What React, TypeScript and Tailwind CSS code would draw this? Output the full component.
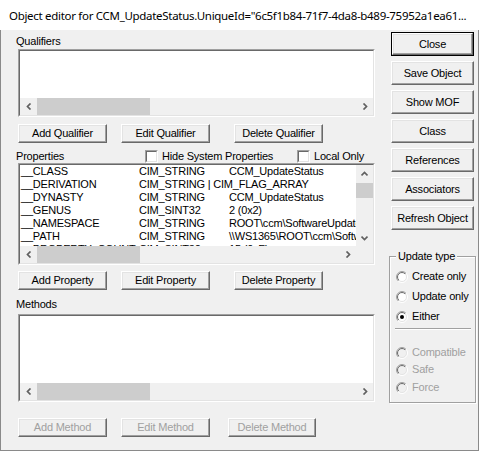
import { useId } from "react";

const SANS = "font-['Liberation_Sans',Arial,sans-serif]";

const rows = [
  { name: "__CLASS", type: "CIM_STRING", value: "CCM_UpdateStatus" },
  { name: "__DERIVATION", type: "CIM_STRING | CIM_FLAG_ARRAY", value: "" },
  { name: "__DYNASTY", type: "CIM_STRING", value: "CCM_UpdateStatus" },
  { name: "__GENUS", type: "CIM_SINT32", value: "2 (0x2)" },
  { name: "__NAMESPACE", type: "CIM_STRING", value: "ROOT\\ccm\\SoftwareUpdates\\UpdatesStore" },
  { name: "__PATH", type: "CIM_STRING", value: "\\\\WS1365\\ROOT\\ccm\\SoftwareUpdates" },
  { name: "__PROPERTY_COUNT", type: "CIM_SINT32", value: "15 (0xF)" },
];

function Chevron({ dir }: { dir: "left" | "right" | "up" | "down" }) {
  const pts = {
    left: "4.5,0.5 1.5,3.5 4.5,6.5",
    right: "1.5,0.5 4.5,3.5 1.5,6.5",
    up: "0.5,4.5 3.5,1.5 6.5,4.5",
    down: "0.5,1.5 3.5,4.5 6.5,1.5",
  }[dir];
  const horiz = dir === "left" || dir === "right";
  return (
    <svg width={horiz ? 6 : 7} height={horiz ? 7 : 6} viewBox={horiz ? "0 0 6 7" : "0 0 7 6"}>
      <polyline points={pts} fill="none" stroke="#606060" strokeWidth="1.7" />
    </svg>
  );
}

function Btn({
  label,
  w = "w-[89px]",
  h = "h-[19px]",
  disabled = false,
  isDefault = false,
}: {
  label: string;
  w?: string;
  h?: string;
  disabled?: boolean;
  isDefault?: boolean;
}) {
  const face = (
    <div
      className={`flex items-center justify-center bg-[#f0f0f0] border border-t-white border-l-white border-r-[#696969] border-b-[#696969] shadow-[inset_-1px_-1px_0_#a0a0a0,inset_1px_1px_0_#e3e3e3] text-[11px] leading-none whitespace-nowrap ${
        isDefault ? "w-full h-full" : `${w} ${h} shrink-0`
      } ${disabled ? "text-[#a0a0a0]" : "text-black"}`}
    >
      {label}
    </div>
  );
  if (isDefault) return <div className={`${w} ${h} shrink-0 border border-black`}>{face}</div>;
  return face;
}

function HScroll({ thumb }: { thumb: string }) {
  return (
    <div className="flex h-[17px] shrink-0 bg-[#f0f0f0]">
      <div className="flex w-[17px] items-center justify-center">
        <Chevron dir="left" />
      </div>
      <div className="flex flex-1">
        <div className={`${thumb} h-full bg-[#cdcdcd]`} />
      </div>
      <div className="flex w-[17px] items-center justify-center">
        <Chevron dir="right" />
      </div>
    </div>
  );
}

function Sunken({ h, children }: { h: string; children: React.ReactNode }) {
  return (
    <div className={`ml-[2px] w-[357px] ${h} border border-t-[#a0a0a0] border-l-[#a0a0a0] border-r-white border-b-white`}>
      <div className="flex h-full w-full flex-col border border-t-[#696969] border-l-[#696969] border-r-[#e3e3e3] border-b-[#e3e3e3] bg-white">
        {children}
      </div>
    </div>
  );
}

function Check({ label }: { label: string }) {
  return (
    <div className="flex items-center">
      <div className="h-[13px] w-[13px] border border-t-[#a0a0a0] border-l-[#a0a0a0] border-r-white border-b-white">
        <div className="h-full w-full border border-t-[#696969] border-l-[#696969] border-r-[#e3e3e3] border-b-[#e3e3e3] bg-white" />
      </div>
      <span className="ml-[4px] whitespace-nowrap">{label}</span>
    </div>
  );
}

function Radio({ label, checked = false, disabled = false }: { label: string; checked?: boolean; disabled?: boolean }) {
  const id = useId().replace(/[^a-zA-Z0-9]/g, "");
  return (
    <div className="flex h-[13px] items-center">
      <svg width="12" height="12" viewBox="0 0 12 12" className="shrink-0">
        <defs>
          <linearGradient id={`o${id}`} x1="0" y1="0" x2="1" y2="1">
            <stop offset="0.5" stopColor="#a0a0a0" />
            <stop offset="0.5" stopColor="#ffffff" />
          </linearGradient>
          <linearGradient id={`i${id}`} x1="0" y1="0" x2="1" y2="1">
            <stop offset="0.5" stopColor="#696969" />
            <stop offset="0.5" stopColor="#e3e3e3" />
          </linearGradient>
        </defs>
        <circle cx="6" cy="6" r="5.5" fill="none" stroke={`url(#o${id})`} />
        <circle cx="6" cy="6" r="4.5" fill={disabled ? "#f0f0f0" : "#ffffff"} stroke={`url(#i${id})`} />
        {checked && <circle cx="6" cy="6" r="2" fill="#000000" />}
      </svg>
      <span className={`ml-[4px] whitespace-nowrap ${disabled ? "text-[#a0a0a0]" : "text-black"}`}>{label}</span>
    </div>
  );
}

export default function App() {
  return (
    <div className={`w-[479px] h-[451px] overflow-hidden bg-white ${SANS} text-[11px] leading-[13px] tracking-[-0.2px] text-black`}>
      {/* title bar */}
      <div className="flex h-[30px] items-center overflow-hidden whitespace-nowrap bg-white pl-[9px] font-['Noto_Sans','Open_Sans',sans-serif] text-[11.5px] tracking-[-0.3px] text-black">
        Object editor for CCM_UpdateStatus.UniqueId="6c5f1b84-71f7-4da8-b489-75952a1ea61...
      </div>

      <div className="flex h-[421px] border border-t-0 border-[#8a8a8a] bg-[#f0f0f0]">
        {/* left side */}
        <div className="flex w-[388px] flex-col pl-[15px] pt-[5px]">
          <div className="h-[13px]">Qualifiers</div>
          <div className="mt-[1px]">
            <Sunken h="h-[68px]">
              <div className="flex-1" />
              <HScroll thumb="w-[113px]" />
            </Sunken>
          </div>
          <div className="ml-[2px] mt-[7px] flex">
            <Btn label="Add Qualifier" />
            <div className="ml-[14px]">
              <Btn label="Edit Qualifier" />
            </div>
            <div className="ml-[24px]">
              <Btn label="Delete Qualifier" />
            </div>
          </div>

          <div className="mt-[7px] flex h-[13px] items-center">
            <div className="w-[129px]">Properties</div>
            <div className="w-[152px]">
              <Check label="Hide System Properties" />
            </div>
            <Check label="Local Only" />
          </div>
          <div>
            <Sunken h="h-[102px]">
              <div className="flex min-h-0 flex-1">
                <div className="flex-1 overflow-hidden pl-[1px]">
                  {rows.map((r) => (
                    <div key={r.name} className="flex h-[13px] whitespace-nowrap">
                      <span className="w-[118px] shrink-0">{r.name}</span>
                      <span className="w-[90px] shrink-0">{r.type}</span>
                      <span className="shrink-0">{r.value}</span>
                    </div>
                  ))}
                </div>
                <div className="flex w-[17px] shrink-0 flex-col bg-[#f0f0f0]">
                  <div className="flex h-[17px] items-center justify-center">
                    <Chevron dir="up" />
                  </div>
                  <div className="mt-[1px] h-[15px] bg-[#cdcdcd]" />
                  <div className="flex-1" />
                  <div className="flex h-[17px] items-center justify-center">
                    <Chevron dir="down" />
                  </div>
                </div>
              </div>
              <div className="flex">
                <div className="flex-1">
                  <HScroll thumb="w-[103px]" />
                </div>
                <div className="w-[17px] bg-[#f0f0f0]" />
              </div>
            </Sunken>
          </div>
          <div className="ml-[2px] mt-[6px] flex">
            <Btn label="Add Property" />
            <div className="ml-[14px]">
              <Btn label="Edit Property" />
            </div>
            <div className="ml-[24px]">
              <Btn label="Delete Property" />
            </div>
          </div>

          <div className="mt-[8px] h-[13px]">Methods</div>
          <div className="mt-[3px]">
            <Sunken h="h-[88px]">
              <div className="flex-1" />
              <HScroll thumb="w-[113px]" />
            </Sunken>
          </div>
          <div className="ml-[2px] mt-[16px] flex">
            <Btn label="Add Method" disabled />
            <div className="ml-[14px]">
              <Btn label="Edit Method" disabled />
            </div>
            <div className="ml-[18px]">
              <Btn label="Delete Method" w="w-[88px]" disabled />
            </div>
          </div>
        </div>

        {/* right side */}
        <div className="flex w-[87px] flex-col">
          <div className="ml-[2px] mt-[2px] flex flex-col gap-[5px]">
            <Btn label="Close" w="w-[83px]" h="h-[24px]" isDefault />
            <Btn label="Save Object" w="w-[83px]" h="h-[24px]" />
            <Btn label="Show MOF" w="w-[83px]" h="h-[24px]" />
            <Btn label="Class" w="w-[83px]" h="h-[24px]" />
            <Btn label="References" w="w-[83px]" h="h-[24px]" />
            <Btn label="Associators" w="w-[83px]" h="h-[24px]" />
            <Btn label="Refresh Object" w="w-[83px]" h="h-[24px]" />
          </div>

          <div className="relative mt-[26px] h-[147px] w-[87px] border border-[#a0a0a0] shadow-[1px_1px_0_#ffffff,inset_1px_1px_0_#ffffff]">
            <span className="absolute -top-[7px] left-[6px] bg-[#f0f0f0] px-[2px]">Update type</span>
            <div className="flex flex-col pl-[6px] pt-[13px]">
              <Radio label="Create only" />
              <div className="mt-[7px]">
                <Radio label="Update only" />
              </div>
              <div className="mt-[7px]">
                <Radio label="Either" checked />
              </div>
              <div className="mr-[4px] ml-[-1px] mt-[5px] h-[2px] border-t border-b border-t-[#a0a0a0] border-b-white" />
              <div className="mt-[16px]">
                <Radio label="Compatible" disabled />
              </div>
              <div className="mt-[4px]">
                <Radio label="Safe" disabled />
              </div>
              <div className="mt-[5px]">
                <Radio label="Force" disabled />
              </div>
            </div>
          </div>
        </div>
      </div>
    </div>
  );
}
